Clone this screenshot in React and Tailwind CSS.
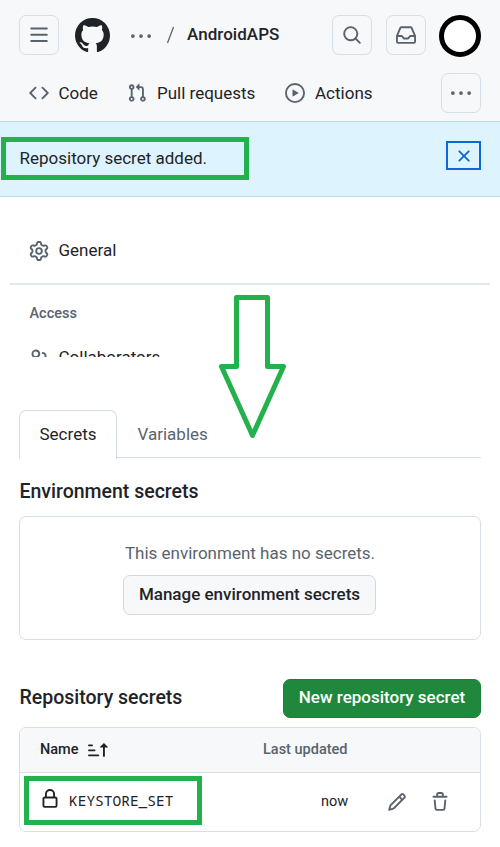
const PATHS = {
  bars: 'M1 2.75A.75.75 0 0 1 1.75 2h12.5a.75.75 0 0 1 0 1.5H1.75A.75.75 0 0 1 1 2.75Zm0 5A.75.75 0 0 1 1.75 7h12.5a.75.75 0 0 1 0 1.5H1.75A.75.75 0 0 1 1 7.75ZM1.75 12h12.5a.75.75 0 0 1 0 1.5H1.75a.75.75 0 0 1 0-1.5Z',
  github: 'M8 0c4.42 0 8 3.58 8 8a8.013 8.013 0 0 1-5.45 7.59c-.4.08-.55-.17-.55-.38 0-.27.01-1.13.01-2.2 0-.75-.25-1.23-.54-1.48 1.78-.2 3.65-.88 3.65-3.95 0-.88-.31-1.59-.82-2.15.08-.2.36-1.02-.08-2.12 0 0-.67-.22-2.2.82-.64-.18-1.32-.27-2-.27-.68 0-1.36.09-2 .27-1.53-1.03-2.2-.82-2.2-.82-.44 1.1-.16 1.92-.08 2.12-.51.56-.82 1.28-.82 2.15 0 3.06 1.86 3.75 3.64 3.95-.23.2-.44.55-.51 1.07-.46.21-1.61.55-2.33-.66-.15-.24-.6-.83-1.23-.82-.67.01-.27.38.01.53.34.19.73.9.82 1.13.16.45.68 1.31 2.69.94 0 .67.01 1.3.01 1.49 0 .21-.15.45-.55.38A7.995 7.995 0 0 1 0 8c0-4.42 3.58-8 8-8Z',
  kebab: 'M8 9.5a1.5 1.5 0 1 0 0-3 1.5 1.5 0 0 0 0 3ZM1.5 9.5a1.5 1.5 0 1 0 0-3 1.5 1.5 0 0 0 0 3Zm13 0a1.5 1.5 0 1 0 0-3 1.5 1.5 0 0 0 0 3Z',
  search: 'M10.68 11.74a6 6 0 0 1-7.922-8.982 6 6 0 0 1 8.982 7.922l3.04 3.04a.749.749 0 0 1-.326 1.275.749.749 0 0 1-.734-.215ZM11.5 7a4.499 4.499 0 1 0-8.997 0A4.499 4.499 0 0 0 11.5 7Z',
  inbox: 'M2.8 2.06A1.75 1.75 0 0 1 4.41 1h7.18c.7 0 1.333.417 1.61 1.06l2.74 6.395c.04.093.06.194.06.295v4.5A1.75 1.75 0 0 1 14.25 15H1.75A1.75 1.75 0 0 1 0 13.25v-4.5c0-.101.02-.202.06-.295Zm1.61.44a.25.25 0 0 0-.23.152L1.887 8H4.75a.75.75 0 0 1 .6.3L6.625 10h2.75l1.275-1.7a.75.75 0 0 1 .6-.3h2.863L11.82 2.652a.25.25 0 0 0-.23-.152Zm10.09 7h-2.875l-1.275 1.7a.75.75 0 0 1-.6.3h-3.5a.75.75 0 0 1-.6-.3L4.375 9.5H1.5v3.75c0 .138.112.25.25.25h12.5a.25.25 0 0 0 .25-.25Z',
  code: 'm11.28 3.22 4.25 4.25a.75.75 0 0 1 0 1.06l-4.25 4.25a.749.749 0 0 1-1.275-.326.749.749 0 0 1 .215-.734L13.94 8l-3.72-3.72a.749.749 0 0 1 .326-1.275.749.749 0 0 1 .734.215Zm-6.56 0a.751.751 0 0 1 1.042.018.751.751 0 0 1 .018 1.042L2.06 8l3.72 3.72a.749.749 0 0 1-.326 1.275.749.749 0 0 1-.734-.215L.47 8.53a.75.75 0 0 1 0-1.06Z',
  pull: 'M1.5 3.25a2.25 2.25 0 1 1 3 2.122v5.256a2.251 2.251 0 1 1-1.5 0V5.372A2.25 2.25 0 0 1 1.5 3.25Zm5.677-.177L9.573.677A.25.25 0 0 1 10 .854V2.5h1A2.5 2.5 0 0 1 13.5 5v5.628a2.251 2.251 0 1 1-1.5 0V5a1 1 0 0 0-1-1h-1v1.646a.25.25 0 0 1-.427.177L7.177 3.427a.25.25 0 0 1 0-.354ZM3.75 2.5a.75.75 0 1 0 0 1.5.75.75 0 0 0 0-1.5Zm0 9.5a.75.75 0 1 0 0 1.5.75.75 0 0 0 0-1.5Zm8.25.75a.75.75 0 1 0 1.5 0 .75.75 0 0 0-1.5 0Z',
  play: 'M8 0a8 8 0 1 1 0 16A8 8 0 0 1 8 0ZM1.5 8a6.5 6.5 0 1 0 13 0 6.5 6.5 0 0 0-13 0Zm4.879-2.773 4.264 2.559a.25.25 0 0 1 0 .428l-4.264 2.559A.25.25 0 0 1 6 10.559V5.442a.25.25 0 0 1 .379-.215Z',
  x: 'M3.72 3.72a.75.75 0 0 1 1.06 0L8 6.94l3.22-3.22a.749.749 0 0 1 1.275.326.749.749 0 0 1-.215.734L9.06 8l3.22 3.22a.749.749 0 0 1-.326 1.275.749.749 0 0 1-.734-.215L8 9.06l-3.22 3.22a.751.751 0 0 1-1.042-.018.751.751 0 0 1-.018-1.042L6.94 8 3.72 4.78a.75.75 0 0 1 0-1.06Z',
  gear: 'M8 0a8.2 8.2 0 0 1 .701.031C9.444.095 9.99.645 10.16 1.29l.288 1.107c.018.066.079.158.212.224.231.114.454.243.668.386.123.082.233.09.299.071l1.103-.303c.644-.176 1.392.021 1.82.63.27.385.506.792.704 1.218.315.675.111 1.422-.364 1.891l-.814.806c-.049.048-.098.147-.088.294.016.257.016.515 0 .772-.01.147.038.246.088.294l.814.806c.475.469.679 1.216.364 1.891a7.977 7.977 0 0 1-.704 1.217c-.428.61-1.176.807-1.82.63l-1.102-.302c-.067-.019-.177-.011-.3.071a5.909 5.909 0 0 1-.668.386c-.133.066-.194.158-.211.224l-.29 1.106c-.168.646-.715 1.196-1.458 1.26a8.006 8.006 0 0 1-1.402 0c-.743-.064-1.289-.614-1.458-1.26l-.289-1.106c-.018-.066-.079-.158-.212-.224a5.738 5.738 0 0 1-.668-.386c-.123-.082-.233-.09-.299-.071l-1.103.303c-.644.176-1.392-.021-1.82-.63a8.12 8.12 0 0 1-.704-1.218c-.315-.675-.111-1.422.363-1.891l.815-.806c.05-.048.098-.147.088-.294a6.214 6.214 0 0 1 0-.772c.01-.147-.038-.246-.088-.294l-.815-.806C.635 6.045.431 5.298.746 4.623a7.92 7.92 0 0 1 .704-1.217c.428-.61 1.176-.807 1.82-.63l1.102.302c.067.019.177.011.3-.071.214-.143.437-.272.668-.386.133-.066.194-.158.211-.224l.29-1.106C6.009.645 6.556.095 7.299.03 7.53.01 7.764 0 8 0Zm-.571 1.525c-.036.003-.108.036-.137.146l-.289 1.105c-.147.561-.549.967-.998 1.189-.173.086-.34.183-.5.29-.417.278-.97.423-1.529.27l-1.103-.303c-.109-.03-.175.016-.195.045-.22.312-.412.644-.573.99-.014.031-.021.11.059.19l.815.806c.411.406.562.957.53 1.456a4.709 4.709 0 0 0 0 .582c.032.499-.119 1.05-.53 1.456l-.815.806c-.081.08-.073.159-.059.19.162.346.353.677.573.989.02.03.085.076.195.046l1.102-.303c.56-.153 1.113-.008 1.53.27.161.107.328.204.501.29.447.222.85.629.997 1.189l.289 1.105c.029.109.101.143.137.146a6.6 6.6 0 0 0 1.142 0c.036-.003.108-.036.137-.146l.289-1.105c.147-.561.549-.967.998-1.189.173-.086.34-.183.5-.29.417-.278.97-.423 1.529-.27l1.103.303c.109.029.175-.016.195-.045.22-.313.411-.644.573-.99.014-.031.021-.11-.059-.19l-.815-.806c-.411-.406-.562-.957-.53-1.456a4.709 4.709 0 0 0 0-.582c-.032-.499.119-1.05.53-1.456l.815-.806c.081-.08.073-.159.059-.19a6.464 6.464 0 0 0-.573-.989c-.02-.03-.085-.076-.195-.046l-1.102.303c-.56.153-1.113.008-1.53-.27a4.44 4.44 0 0 0-.501-.29c-.447-.222-.85-.629-.997-1.189l-.289-1.105c-.029-.11-.101-.143-.137-.146a6.6 6.6 0 0 0-1.142 0ZM11 8a3 3 0 1 1-6 0 3 3 0 0 1 6 0ZM9.5 8a1.5 1.5 0 1 0-3.001.001A1.5 1.5 0 0 0 9.5 8Z',
  people: 'M2 5.5a3.5 3.5 0 1 1 5.898 2.549 5.508 5.508 0 0 1 3.034 4.084.75.75 0 1 1-1.482.235 4 4 0 0 0-7.9 0 .75.75 0 0 1-1.482-.236A5.507 5.507 0 0 1 3.102 8.05 3.493 3.493 0 0 1 2 5.5ZM11 4a3.001 3.001 0 0 1 2.22 5.018 5.01 5.01 0 0 1 2.56 3.012.749.749 0 0 1-.885.954.752.752 0 0 1-.549-.514 3.507 3.507 0 0 0-2.522-2.372.75.75 0 0 1-.574-.73v-.352a.75.75 0 0 1 .416-.672A1.5 1.5 0 0 0 11 5.5.75.75 0 0 1 11 4Zm-5.5-.5a2 2 0 1 0-.001 3.999A2 2 0 0 0 5.5 3.5Z',
  sort: 'm12.927 2.573 3 3A.25.25 0 0 1 15.75 6H13.5v6.75a.75.75 0 0 1-1.5 0V6H9.75a.25.25 0 0 1-.177-.427l3-3a.25.25 0 0 1 .354 0ZM0 12.25a.75.75 0 0 1 .75-.75h7.5a.75.75 0 0 1 0 1.5H.75a.75.75 0 0 1-.75-.75Zm0-4a.75.75 0 0 1 .75-.75h4.5a.75.75 0 0 1 0 1.5H.75a.75.75 0 0 1-.75-.75Zm0-4a.75.75 0 0 1 .75-.75h2.5a.75.75 0 0 1 0 1.5H.75a.75.75 0 0 1-.75-.75Z',
  lock: 'M4 4a4 4 0 0 1 8 0v2h.25c.966 0 1.75.784 1.75 1.75v5.5A1.75 1.75 0 0 1 12.25 15h-8.5A1.75 1.75 0 0 1 2 13.25v-5.5C2 6.784 2.784 6 3.75 6H4Zm8.25 3.5h-8.5a.25.25 0 0 0-.25.25v5.5c0 .138.112.25.25.25h8.5a.25.25 0 0 0 .25-.25v-5.5a.25.25 0 0 0-.25-.25ZM10.5 6V4a2.5 2.5 0 1 0-5 0v2Z',
  pencil: 'M11.013 1.427a1.75 1.75 0 0 1 2.474 0l1.086 1.086a1.75 1.75 0 0 1 0 2.474l-8.61 8.61c-.21.21-.47.364-.756.445l-3.251.93a.75.75 0 0 1-.927-.928l.929-3.25c.081-.286.235-.547.445-.758l8.61-8.61Zm.176 4.823L9.75 4.81l-6.286 6.287a.253.253 0 0 0-.064.108l-.558 1.953 1.953-.558a.253.253 0 0 0 .108-.064Zm1.238-3.763a.25.25 0 0 0-.354 0L10.811 3.75l1.439 1.44 1.263-1.263a.25.25 0 0 0 0-.354Z',
  trash: 'M11 1.75V3h2.25a.75.75 0 0 1 0 1.5H2.75a.75.75 0 0 1 0-1.5H5V1.75C5 .784 5.784 0 6.75 0h2.5C10.216 0 11 .784 11 1.75ZM4.496 6.675l.66 6.6a.25.25 0 0 0 .249.225h5.19a.25.25 0 0 0 .249-.225l.66-6.6a.75.75 0 0 1 1.492.149l-.66 6.6A1.748 1.748 0 0 1 10.595 15h-5.19a1.75 1.75 0 0 1-1.741-1.575l-.66-6.6a.75.75 0 1 1 1.492-.15ZM6.5 1.75V3h3V1.75a.25.25 0 0 0-.25-.25h-2.5a.25.25 0 0 0-.25.25Z',
};

function Icon({ name, className = 'size-[20px] text-[#59636e]' }) {
  return (
    <svg viewBox="0 0 16 16" fill="currentColor" aria-hidden="true" className={`shrink-0 ${className}`}>
      <path d={PATHS[name]} />
    </svg>
  );
}

function IconButton({ name, label, className = '' }) {
  return (
    <button
      aria-label={label}
      className={`flex size-[40px] shrink-0 items-center justify-center rounded-[7px] border border-[#d6dfe7] ${className}`}
    >
      <Icon name={name} />
    </button>
  );
}

function Header() {
  return (
    <header className="h-[121px] bg-[#f6f8fa] pt-[15px]">
      <div className="flex h-[40px] items-center pl-[19px]">
        <IconButton name="bars" label="Menu" />
        <Icon name="github" className="ml-[16px] size-[35px] text-[#1f2328]" />
        <Icon name="kebab" className="mt-px ml-[21px] size-[20px] text-[#59636e]" />
        <svg viewBox="0 0 8 18" className="ml-[15px] h-[18px] w-2 text-[#59636e]" aria-hidden="true">
          <path d="M7.5 1 1.5 17" stroke="currentColor" strokeWidth="1.3" />
        </svg>
        <span className="ml-[13px] w-[93px] text-[17px] font-medium tracking-[0.05px]">AndroidAPS</span>
        <IconButton name="search" label="Search" className="ml-[52px]" />
        <IconButton name="inbox" label="Inbox" className="ml-[14px]" />
        <span className="mt-[2px] ml-[13px] size-[42px] shrink-0 rounded-full border-[5px] border-black bg-white" />
      </div>
      <nav className="mt-[18px] flex h-[40px] items-center pl-[29px] text-[17px]">
        <Icon name="code" />
        <span className="mt-px ml-[9.5px] w-[68.5px]">Code</span>
        <Icon name="pull" />
        <span className="mt-px ml-[10px] w-[128px]">Pull requests</span>
        <Icon name="play" />
        <span className="mt-px ml-[10px] w-[126px]">Actions</span>
        <IconButton name="kebab" label="More" />
      </nav>
    </header>
  );
}

function Flash() {
  return (
    <div className="flex h-[76px] items-center border-y border-[#b6dcfa] bg-[#ddf4ff] pr-[19px] pl-px">
      <div className="mb-[2px] flex h-[43px] w-[248px] items-center border-[5px] border-[#22b14c] pt-[2px] pl-[13.5px] text-[17px]">
        Repository secret added.
      </div>
      <button
        aria-label="Dismiss"
        className="mb-[7px] ml-auto flex h-[29px] w-[35px] items-center justify-center border-2 border-[#0969da] text-[#0969da]"
      >
        <Icon name="x" className="size-[20px]" />
      </button>
    </div>
  );
}

function SideMenu() {
  return (
    <section className="h-[160px] overflow-hidden px-[10px]">
      <div className="flex h-[88px] items-center border-b-2 border-[#e4e9ee] pt-[21px] pl-[19px] text-[17px]">
        <Icon name="gear" />
        <span className="ml-[9.5px]">General</span>
      </div>
      <h3 className="mt-[19px] pl-[19.5px] text-[14.5px] leading-5 font-medium text-[#59636e]">Access</h3>
      <div className="mt-[21px] flex items-center pl-[19px] text-[17px] leading-6">
        <Icon name="people" />
        <span className="ml-[9.5px]">Collaborators</span>
      </div>
    </section>
  );
}

function Tabs() {
  return (
    <div className="flex h-[49px] pr-[19px] pl-[19px] text-[17px]">
      <div className="flex w-[98px] items-center justify-center rounded-t-[7px] border border-b-0 border-[#d6dfe7]">
        Secrets
      </div>
      <div className="mb-px flex flex-1 items-center border-b border-[#d6dfe7] pt-[2px] pl-[20.5px] text-[#59636e]">
        Variables
      </div>
    </div>
  );
}

function EnvironmentSecrets() {
  return (
    <section className="px-[19px] pt-[21px]">
      <h2 className="pl-[0.5px] text-[19.5px] leading-6 font-medium">Environment secrets</h2>
      <div className="mt-[12px] flex h-[124px] flex-col items-center rounded-[7px] border border-[#d6dfe7] pt-[24px]">
        <p className="text-[17px] leading-6 text-[#59636e]">This environment has no secrets.</p>
        <button className="mt-[10px] mr-px h-[40px] w-[253px] rounded-[7px] border border-[#d1d9e0] bg-[#f6f8fa] text-[17px] font-medium">
          Manage environment secrets
        </button>
      </div>
    </section>
  );
}

function RepositorySecrets() {
  return (
    <section className="px-[19px] pt-[39px]">
      <div className="flex h-[39px] items-center justify-between">
        <h2 className="mb-[2px] pl-[0.5px] text-[19.5px] font-medium">Repository secrets</h2>
        <button className="h-[39px] w-[198px] rounded-[7px] border border-[#1c7f38] bg-[#1f883d] pb-[2px] text-[17px] font-medium text-white">
          New repository secret
        </button>
      </div>
      <div className="mt-[9px] h-[105px] rounded-[7px] border border-[#d6dfe7]">
        <div className="flex h-[45px] items-center rounded-t-[6px] border-b border-[#d6dfe7] bg-[#f6f8fa] pl-5 text-[14.5px] font-medium">
          <span>Name</span>
          <Icon name="sort" className="ml-[9px] size-[20px]" />
          <span className="ml-auto w-[217px] text-[#59636e]">Last updated</span>
        </div>
        <div className="flex h-[58px] items-center pl-1">
          <div className="mb-[4px] flex h-[49px] w-[178px] items-center border-[5px] border-[#22b14c] pl-[10.5px]">
            <Icon name="lock" className="mb-[2px] size-[20px]" />
            <span className="ml-[9.5px] pt-px font-['Noto_Sans_Mono','DejaVu_Sans_Mono',monospace] text-[14.5px]">
              KEYSTORE_SET
            </span>
          </div>
          <span className="ml-[119px] w-[66px] text-[14.5px]">now</span>
          <Icon name="pencil" className="mb-px size-[20px] text-[#59636e]" />
          <Icon name="trash" className="mb-px ml-[23px] size-[20px] text-[#59636e]" />
        </div>
      </div>
    </section>
  );
}

export default function App() {
  return (
    <div className="relative h-[847px] w-[500px] overflow-hidden bg-white font-[Roboto,sans-serif] text-[#1f2328]">
      <Header />
      <Flash />
      <SideMenu />
      <div className="h-[53px]" />
      <Tabs />
      <EnvironmentSecrets />
      <RepositorySecrets />
      <svg
        className="absolute top-[290px] left-[215px] h-[152px] w-[76px]"
        viewBox="215 290 76 152"
        fill="none"
        aria-hidden="true"
      >
        <path
          d="M236.5 366.5V297.5H267.5V366.5H283.5L252.5 435.5L221.5 366.5H236.5Z"
          stroke="#22b14c"
          strokeWidth="5"
          strokeLinejoin="round"
        />
      </svg>
    </div>
  );
}
